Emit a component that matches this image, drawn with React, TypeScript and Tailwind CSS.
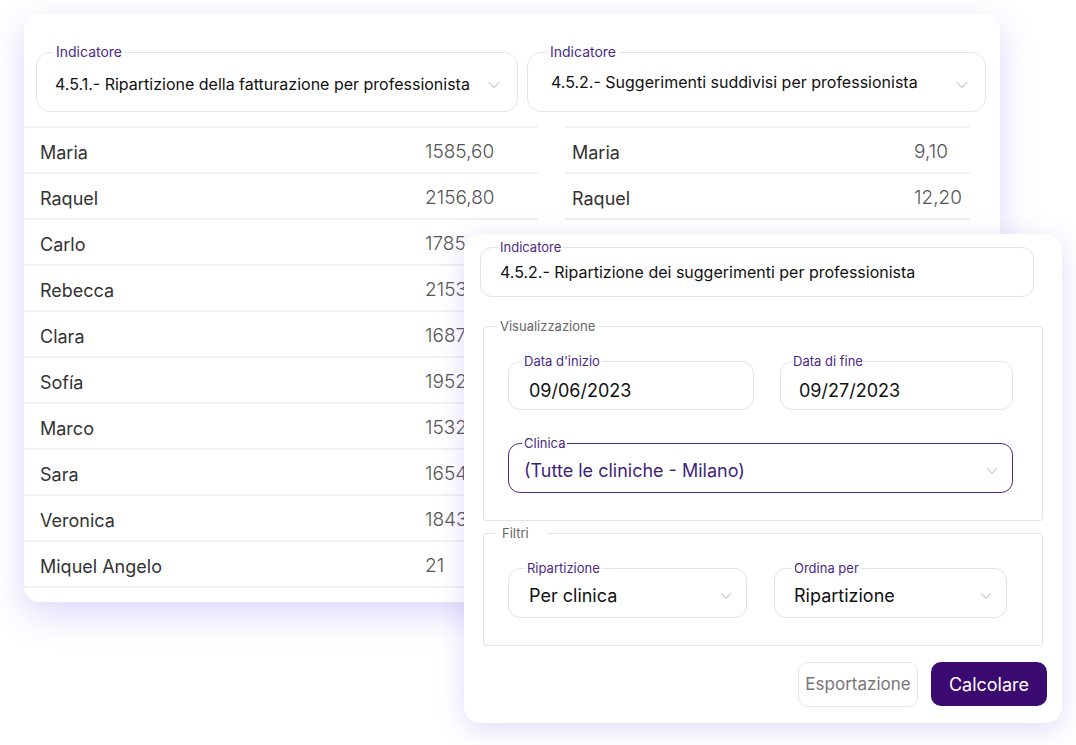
import React from "react";
import { ChevronDown } from "lucide-react";

const leftRows = [
  ["Maria", "1585,60"],
  ["Raquel", "2156,80"],
  ["Carlo", "1785,40"],
  ["Rebecca", "2153,10"],
  ["Clara", "1687,90"],
  ["Sofía", "1952,30"],
  ["Marco", "1532,70"],
  ["Sara", "1654,20"],
  ["Veronica", "1843,50"],
  ["Miquel Angelo", "21"],
];

const rightRows = [
  ["Maria", "9,10"],
  ["Raquel", "12,20"],
];

function Field({
  label,
  value,
  className,
  legendClass,
  valueClass,
  active,
  chevron,
}: {
  label: string;
  value: string;
  className: string;
  legendClass: string;
  valueClass: string;
  active?: boolean;
  chevron?: boolean;
}) {
  return (
    <fieldset
      className={`${className} rounded-[12px] ${
        active ? "border-[1.5px] border-[#4b2a86]" : "border border-[#e3e3e3]"
      } flex items-center justify-between`}
    >
      <legend className={`${legendClass} px-[2px] text-[13px] leading-[15px] text-[#4b2a86]`}>
        {label}
      </legend>
      <span
        className={`${valueClass} text-[18px] ${active ? "text-[#3f1f7a]" : "text-[#111]"}`}
      >
        {value}
      </span>
      {chevron && (
        <ChevronDown
          size={18}
          strokeWidth={1.6}
          className="mr-[11px] -mt-[2px] text-[#cfcfcf]"
        />
      )}
    </fieldset>
  );
}

export default function App() {
  return (
    <div
      className="relative w-[1076px] h-[745px] bg-white overflow-hidden"
      style={{ fontFamily: "Inter, 'Noto Sans', sans-serif" }}
    >
      {/* Report card */}
      <div className="ml-[24px] mt-[14px] w-[976px] h-[588px] rounded-[16px] bg-white shadow-[0_12px_34px_rgba(130,110,240,0.28)] pt-[30px]">
        <div className="flex gap-[9px] pl-[12px]">
          <fieldset className="w-[482px] h-[68px] rounded-[14px] border border-[#e6e6e6] flex items-center justify-between">
            <legend className="ml-[16px] px-[3px] text-[14px] leading-[16px] text-[#4b2a86]">
              Indicatore
            </legend>
            <span className="pl-[18px] -mt-[3px] text-[16px] text-[#111]">
              4.5.1.- Ripartizione della fatturazione per professionista
            </span>
            <ChevronDown size={20} strokeWidth={1.5} className="mr-[13px] -mt-[2px] text-[#d2d2d2]" />
          </fieldset>
          <fieldset className="w-[459px] h-[68px] rounded-[14px] border border-[#e6e6e6] flex items-center justify-between">
            <legend className="ml-[19px] px-[3px] text-[14px] leading-[16px] text-[#4b2a86]">
              Indicatore
            </legend>
            <span className="pl-[23px] -mt-[7px] text-[16px] text-[#111]">
              4.5.2.- Suggerimenti suddivisi per professionista
            </span>
            <ChevronDown size={20} strokeWidth={1.5} className="mr-[13px] -mt-[2px] text-[#d2d2d2]" />
          </fieldset>
        </div>

        <div className="flex mt-[14px]">
          <div className="w-[514px] border-t-2 border-[#f1f1f1]">
            {leftRows.map(([name, val]) => (
              <div
                key={name}
                className="grid grid-cols-[401px_1fr] items-center h-[46px] pt-[4px] border-b-2 border-[#f1f1f1]"
              >
                <span className="pl-[16px] text-[18px] text-[#333]">{name}</span>
                <span className="text-[19px] text-[#555] font-light">{val}</span>
              </div>
            ))}
          </div>
          <div className="ml-[27px] w-[405px] border-t-2 border-[#f1f1f1]">
            {rightRows.map(([name, val]) => (
              <div
                key={name}
                className="grid grid-cols-[349px_1fr] items-center h-[46px] pt-[4px] border-b-2 border-[#f1f1f1]"
              >
                <span className="pl-[7px] text-[18px] text-[#333]">{name}</span>
                <span className="text-[19px] text-[#555] font-light">{val}</span>
              </div>
            ))}
          </div>
        </div>
      </div>

      {/* Settings window, overlapping the report */}
      <div className="absolute left-[464px] top-[234px] w-[598px] h-[489px] rounded-[16px] bg-white shadow-[0_6px_26px_rgba(130,110,240,0.25)] px-[16px] pt-[6px]">
        <fieldset className="w-[554px] h-[57px] rounded-[12px] border border-[#e3e3e3] flex items-center">
          <legend className="ml-[17px] px-[2px] text-[13px] leading-[15px] text-[#4b2a86]">
            Indicatore
          </legend>
          <span className="pl-[19px] -mt-[8px] text-[16px] text-[#111]">
            4.5.2.- Ripartizione dei suggerimenti per professionista
          </span>
        </fieldset>

        <fieldset className="ml-[3px] mt-[22px] w-[560px] h-[202px] rounded-[3px] border border-[#e6e4dc]">
          <legend className="ml-[13px] px-[3px] text-[13px] leading-[15px] text-[#666]">
            Visualizzazione
          </legend>
          <div className="px-[24px] pt-[20px]">
            <div className="flex gap-[26px]">
              <Field
                label="Data d'inizio"
                value="09/06/2023"
                legendClass="ml-[13px]"
                valueClass="pl-[20px] mt-[2px]"
                className="w-[246px] h-[56px]"
              />
              <Field
                label="Data di fine"
                value="09/27/2023"
                legendClass="ml-[10px]"
                valueClass="pl-[18px] mt-[2px]"
                className="w-[233px] h-[56px]"
              />
            </div>
            <Field
              label="Clinica"
              value="(Tutte le cliniche - Milano)"
              active
              chevron
              legendClass="ml-[13px]"
              valueClass="pl-[15px] -mt-[2px]"
              className="mt-[26px] w-[505px] h-[57px]"
            />
          </div>
        </fieldset>

        <fieldset className="ml-[3px] mt-[5px] w-[560px] h-[120px] rounded-[3px] border border-[#e6e4dc]">
          <legend className="ml-[13px] pl-[5px] pr-[18px] text-[13px] leading-[15px] text-[#666]">
            Filtri
          </legend>
          <div className="flex gap-[27px] px-[24px] pt-[20px]">
            <Field
              label="Ripartizione"
              value="Per clinica"
              chevron
              legendClass="ml-[16px]"
              valueClass="pl-[20px] -mt-[2px]"
              className="w-[239px] h-[57px]"
            />
            <Field
              label="Ordina per"
              value="Ripartizione"
              chevron
              legendClass="ml-[17px]"
              valueClass="pl-[19px] -mt-[2px]"
              className="w-[233px] h-[57px]"
            />
          </div>
        </fieldset>

        <div className="flex justify-end gap-[13px] mt-[16px] -mr-[1px]">
          <button className="w-[120px] h-[45px] rounded-[10px] border border-[#e6e6e6] bg-white text-[17px] text-[#777]">
            Esportazione
          </button>
          <button className="w-[116px] h-[44px] rounded-[10px] bg-[#3b0a70] text-[18px] text-white">
            Calcolare
          </button>
        </div>
      </div>
    </div>
  );
}
